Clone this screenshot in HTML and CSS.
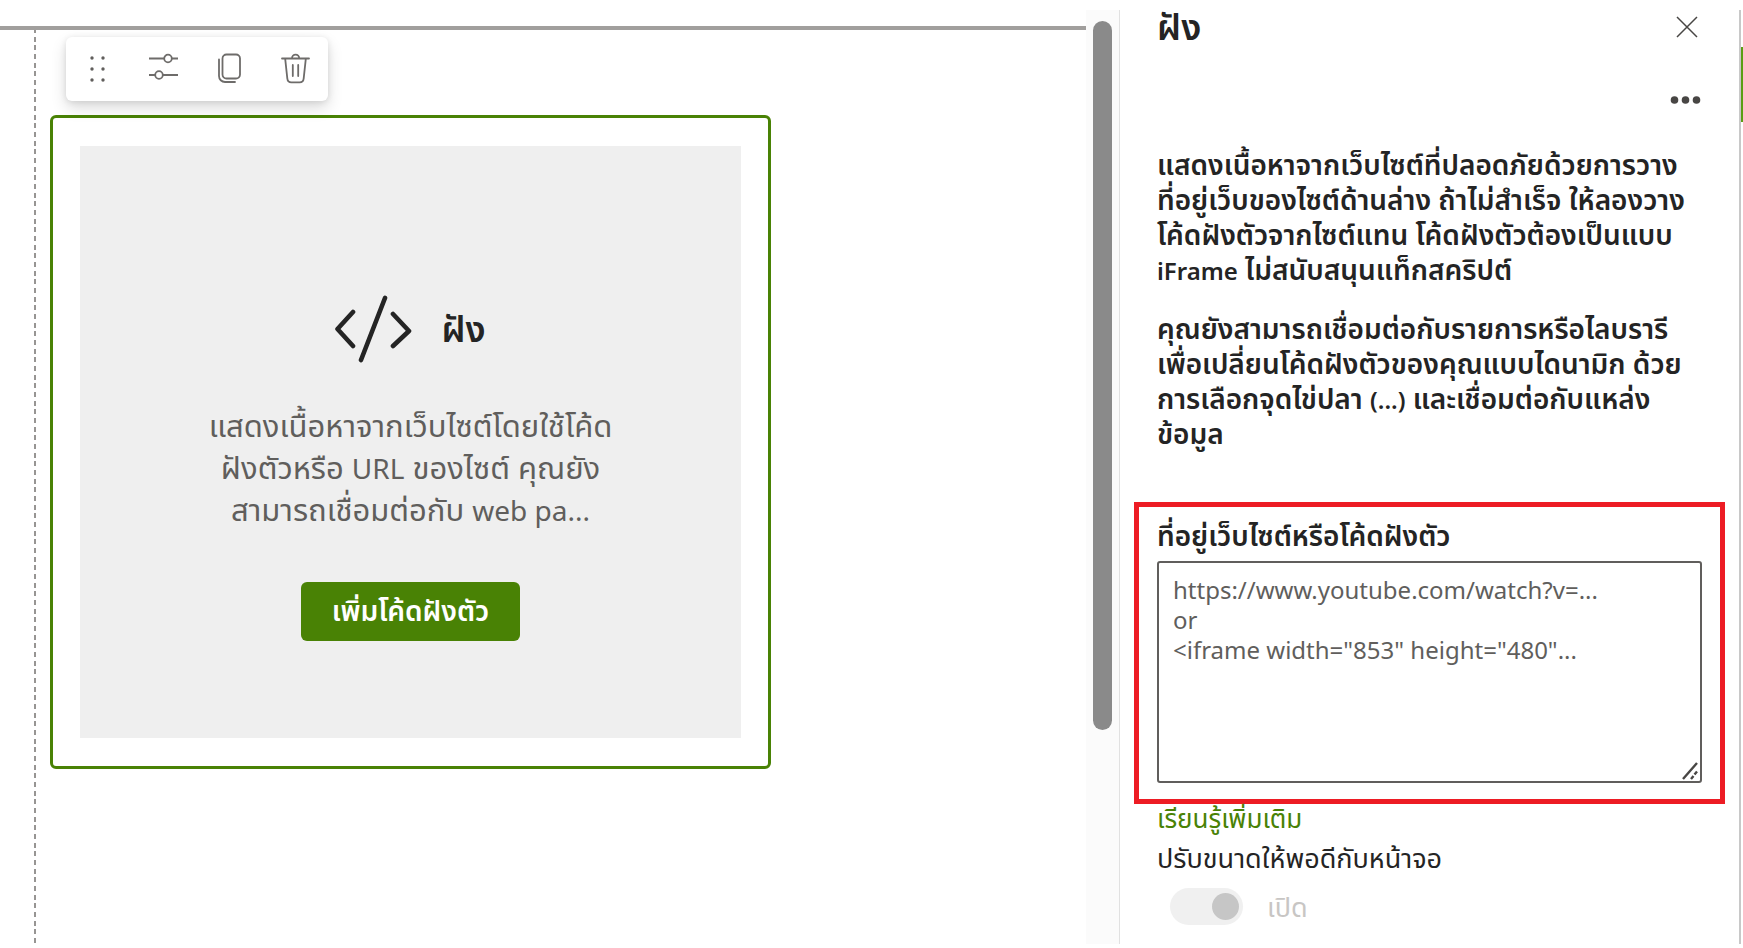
FILE: index.html
```html
<!DOCTYPE html>
<html lang="th">
<head>
<meta charset="utf-8">
<meta name="viewport" content="width=device-width, initial-scale=1">
<title>ฝัง</title>
<link rel="stylesheet" href="styles.css">
</head>
<body>
<div class="app">
  <main class="canvas">
    <div class="section">
      <div class="toolbar" role="toolbar" aria-label="Web part">
        <button class="tool" type="button" aria-label="ย้าย">
          <svg width="32" height="32" viewBox="0 0 32 32" fill="#605e5c"><circle cx="10" cy="5" r="1.700"/><circle cx="21" cy="5" r="1.700"/><circle cx="10" cy="16" r="1.700"/><circle cx="21" cy="16" r="1.700"/><circle cx="10" cy="27" r="1.700"/><circle cx="21" cy="27" r="1.700"/></svg>
        </button>
        <button class="tool" type="button" aria-label="แก้ไข">
          <svg width="32" height="32" viewBox="0 0 32 32" fill="none" stroke="#6e6c6a" stroke-width="1.8"><path d="M1 5.500h15M24 5.500h6M1 22h6M15 22h15"/><circle cx="20" cy="5.500" r="3.800"/><circle cx="11" cy="22" r="3.800"/></svg>
        </button>
        <button class="tool" type="button" aria-label="ทำซ้ำ">
          <svg width="32" height="32" viewBox="0 0 32 32" fill="none" stroke="#6e6c6a" stroke-width="1.800" stroke-linecap="round"><rect x="8.500" y="1.500" width="17.500" height="24" rx="4"/><path d="M5 6.500v16.500a6 6 0 0 0 6 6h10"/></svg>
        </button>
        <button class="tool" type="button" aria-label="ลบ">
          <svg width="32" height="32" viewBox="0 0 32 32" fill="none" stroke="#6e6c6a" stroke-width="1.800" stroke-linecap="round"><path d="M2 5.500h27M12 5.300a3.600 3.600 0 0 1 7.200 0M5.200 5.800l2.100 19.500q.4 4 4 4h8.400q3.600 0 4-4l2.100-19.500M12.800 12v11M18.200 12v11"/></svg>
        </button>
      </div>
      <article class="webpart">
        <div class="placeholder">
          <h2 class="placeholder-title">
            <svg width="78" height="68" viewBox="0 0 78 68" fill="none" stroke="#242424" stroke-width="4.600" stroke-linecap="round" stroke-linejoin="round"><path d="M18 17L2.500 34l15.500 17M50 3L26 65M58 19l16 17-16 15"/></svg>
            <span>ฝัง</span>
          </h2>
          <p class="placeholder-text">แสดงเนื้อหาจากเว็บไซต์โดยใช้โค้ด<br>ฝังตัวหรือ <span class="latin" lang="en">URL</span> ของไซต์ คุณยัง<br>สามารถเชื่อมต่อกับ <span class="latin" lang="en">web pa...</span></p>
          <button class="primary" type="button">เพิ่มโค้ดฝังตัว</button>
        </div>
      </article>
    </div>
  </main>
  <div class="scroll-track"><div class="scroll-thumb"></div></div>
  <aside class="panel">
    <header class="panel-head">
      <h1 class="panel-title">ฝัง</h1>
      <button class="icon-button" type="button" aria-label="ปิด">
        <svg width="22" height="22" viewBox="0 0 22 22" fill="none" stroke="#484644" stroke-width="1.500"><path d="M1 1l20 20M21 1L1 21"/></svg>
      </button>
    </header>
    <div class="panel-menu">
      <button class="icon-button" type="button" aria-label="เพิ่มเติม">
        <svg width="32" height="8" viewBox="0 0 32 8" fill="#484644"><circle cx="4.500" cy="4" r="3.800"/><circle cx="15.500" cy="4" r="3.800"/><circle cx="26.500" cy="4" r="3.800"/></svg>
      </button>
    </div>
    <div class="description">
      <p>แสดงเนื้อหาจากเว็บไซต์ที่ปลอดภัยด้วยการวาง<br>ที่อยู่เว็บของไซต์ด้านล่าง ถ้าไม่สำเร็จ ให้ลองวาง<br>โค้ดฝังตัวจากไซต์แทน โค้ดฝังตัวต้องเป็นแบบ<br><span class="latin" lang="en">iFrame</span> ไม่สนับสนุนแท็กสคริปต์</p>
      <p>คุณยังสามารถเชื่อมต่อกับรายการหรือไลบรารี<br>เพื่อเปลี่ยนโค้ดฝังตัวของคุณแบบไดนามิก ด้วย<br>การเลือกจุดไข่ปลา <span class="latin">(...)</span> และเชื่อมต่อกับแหล่ง<br>ข้อมูล</p>
    </div>
    <div class="field">
      <label class="field-label" for="embed">ที่อยู่เว็บไซต์หรือโค้ดฝังตัว</label>
      <div class="field-box">
        <textarea class="field-input" id="embed" placeholder="https://www.youtube.com/watch?v=...&#10;or&#10;&lt;iframe width=&quot;853&quot; height=&quot;480&quot;..."></textarea>
        <svg class="grip" width="18" height="18" viewBox="0 0 18 18" fill="none" stroke="#484644" stroke-width="2.400"><path d="M2 17L16 1M10 17l2.500-3M13.500 12.500l2.500-3"/></svg>
      </div>
    </div>
    <a class="more" href="#">เรียนรู้เพิ่มเติม</a>
    <label class="toggle-label" for="resize">ปรับขนาดให้พอดีกับหน้าจอ</label>
    <div class="toggle-row">
      <input class="toggle" id="resize" type="checkbox" role="switch" checked disabled>
      <span class="toggle-state">เปิด</span>
    </div>
  </aside>
  <div class="edge"></div>
</div>
</body>
</html>
```
FILE: styles.css
```css
* { box-sizing: border-box; }
body {
  margin: 0;
  background: #fff;
  color: #242424;
  font-family: "Noto Sans", "Noto Sans Thai", "Open Sans", sans-serif;
  font-size: 28px;
}
h1, h2, p { margin: 0; }
button { font: inherit; border: 0; background: none; padding: 0; cursor: pointer; }
svg { display: block; }

.app {
  display: grid;
  grid-template-columns: 1fr 33px 622px 2px;
  min-height: 100vh;
  padding: 10px 0 4px;
}

.canvas { display: flex; flex-direction: column; padding: 16px 0 0; }
.section {
  flex: 1;
  border-top: 4px solid #a19f9d;
  padding: 7px 0 0 50px;
  background:
    linear-gradient(#979593 5px, transparent 5px 9px, #979593 9px 14px, transparent 14px 17px, #979593 17px 22px, transparent 22px)
    34px -2px / 2px 26px repeat-y;
}
.toolbar {
  display: inline-flex;
  gap: 2px;
  margin-left: 16px;
  background: #fff;
  border-radius: 6px;
  box-shadow: 0 7px 16px rgba(0, 0, 0, .14), 0 1px 6px rgba(0, 0, 0, .1);
  vertical-align: top;
}
.tool { display: grid; place-items: center; width: 64px; height: 64px; }

.webpart {
  width: 70%;
  max-width: 721px;
  margin-top: 14px;
  border: 3px solid #498205;
  border-radius: 6px;
  padding: 28px 27px;
}
.placeholder {
  display: flex;
  flex-direction: column;
  align-items: center;
  padding: 148px 24px 97px;
  background: #efefef;
  text-align: center;
}
.placeholder-title {
  display: flex;
  align-items: center;
  gap: 28px;
  font-size: 36px;
  font-weight: 600;
  line-height: 70px;
}
.placeholder-text {
  margin: 40px 0 52px;
  color: #605e5c;
  font-size: 31px;
  line-height: 42px;
}
.placeholder-text .latin { font-size: 28px; line-height: 1; }
.primary {
  height: 59px;
  padding: 2px 31px 0;
  border-radius: 6px;
  background: #498205;
  color: #fff;
  font-weight: 600;
}

.scroll-track { padding: 11px 7px 0; background: #fbfbfb; }
.scroll-thumb { height: 77%; max-height: 709px; border-radius: 10px; background: #8a8a8a; }

.panel {
  border: solid #e1e1e1;
  border-width: 0 2px 0 1px;
  border-right-color: #c8c8c8;
  padding: 0 37px;
}
.panel-head { display: flex; justify-content: space-between; align-items: center; height: 34px; }
.panel-title { font-size: 36px; font-weight: 600; line-height: 34px; }
.panel-head .icon-button { margin-right: 4px; }
.panel-menu { display: flex; justify-content: flex-end; padding: 52px 0 43px; }
.description { display: grid; gap: 24px; font-weight: 600; line-height: 35px; }
.description .latin { font-size: 24px; line-height: 1; }
.field {
  margin: 51px -23px 0;
  border: 5px solid #ed1c24;
  padding: 10px 18px 16px;
}
.field-label { display: block; margin-bottom: 8px; font-weight: 600; line-height: 36px; }
.field-box { position: relative; }
.field-input {
  display: block;
  width: 100%;
  height: 222px;
  border: 2px solid #605e5c;
  border-radius: 3px;
  padding: 12px 14px;
  font: inherit;
  font-size: 24px;
  line-height: 30px;
  resize: none;
}
.field-input::placeholder { color: #605e5c; opacity: 1; }
.grip { position: absolute; right: 3px; bottom: 3px; }
.more { display: block; width: fit-content; color: #498205; font-size: 26px; line-height: 28px; text-decoration: none; }
.toggle-label { display: block; margin-top: 8px; font-size: 27px; line-height: 36px; }
.toggle-row { display: flex; align-items: center; gap: 24px; margin-top: 12px; padding-left: 13px; }
.toggle {
  appearance: none;
  display: flex;
  justify-content: flex-end;
  align-items: center;
  width: 73px;
  height: 37px;
  margin: 0;
  padding: 0 4px;
  border-radius: 19px;
  background: #f0f0f0;
}
.toggle::before { content: ""; width: 27px; height: 27px; border-radius: 50%; background: #c6c6c6; }
.toggle-state { color: #c8c6c4; font-size: 27px; line-height: 36px; }

.edge { height: 75px; margin-top: 37px; background: #5a9e14; }
```
